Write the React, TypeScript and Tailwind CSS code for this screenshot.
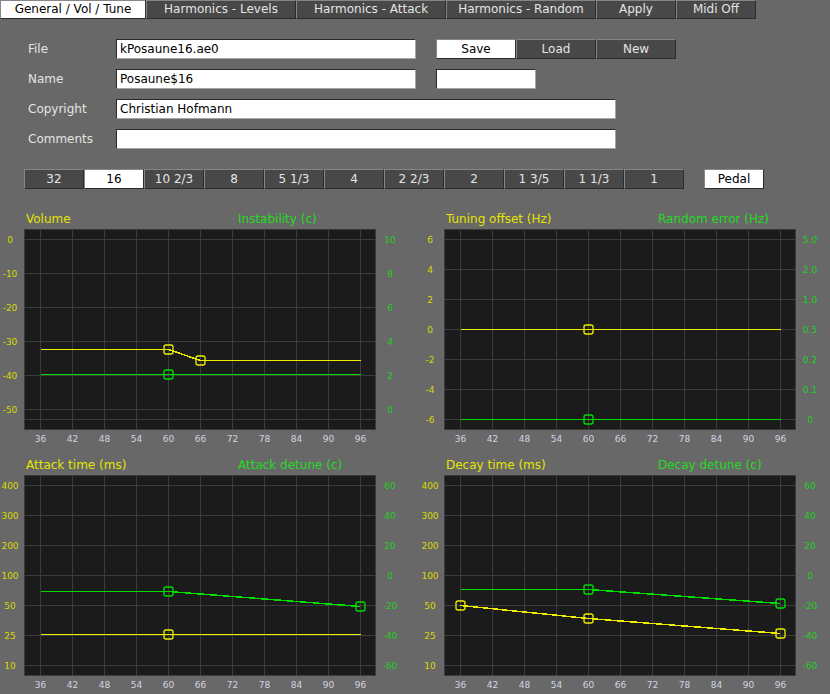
import React from "react";

const tabs = [
  { label: "General / Vol / Tune", w: "w-[146px]", active: true },
  { label: "Harmonics - Levels", w: "w-[150px]", active: false },
  { label: "Harmonics - Attack", w: "w-[150px]", active: false },
  { label: "Harmonics - Random", w: "w-[150px]", active: false },
  { label: "Apply", w: "w-[80px]", active: false },
  { label: "Midi Off", w: "w-[80px]", active: false },
];

const footages = ["32", "16", "10 2/3", "8", "5 1/3", "4", "2 2/3", "2", "1 3/5", "1 1/3", "1"];

const raised = "border border-t-[#868686] border-l-[#868686] border-b-[#2c2c2c] border-r-[#2c2c2c]";
const sunken = "border border-t-[#2a2a2a] border-l-[#2a2a2a] border-b-[#a4a4a4] border-r-[#a4a4a4]";

const YEL = "#eeee00";
const GRN = "#00dd00";

type Pt = [number, number];
type Series = { color: string; pts: Pt[]; marks: Pt[] };

// x position of a key (36..96) inside the plot, plot starts at 24
const kx = (n: number) => 24 + 16 + ((n - 36) / 6) * 32;

const keys = [36, 42, 48, 54, 60, 66, 72, 78, 84, 90, 96];

function Chart({
  hLines,
  left,
  right,
  series,
}: {
  hLines: number[];
  left: string[];
  right: string[];
  series: Series[];
}) {
  return (
    <svg width={420} height={227} className="block" shapeRendering="crispEdges">
      <rect x={24} y={0} width={352} height={201} fill="#1b1b1b" />
      <rect x={24.5} y={0.5} width={351} height={200} fill="none" stroke="#3a3a3a" />
      {keys.map((k) => (
        <line key={k} x1={kx(k) + 0.5} x2={kx(k) + 0.5} y1={0} y2={201} stroke="#3c3c3c" />
      ))}
      {hLines.map((y) => (
        <line key={y} x1={24} x2={376} y1={y + 0.5} y2={y + 0.5} stroke="#3c3c3c" />
      ))}
      {left.map((t, i) => (
        <text
          key={"l" + t}
          x={10}
          y={hLines[i] + 1}
          fill="#d8d800"
          fontSize={9}
          textAnchor="middle"
          dominantBaseline="central"
          fontFamily="DejaVu Sans, sans-serif"
        >
          {t}
        </text>
      ))}
      {right.map((t, i) => (
        <text
          key={"r" + t}
          x={390}
          y={hLines[i] + 1}
          fill="#22d022"
          fontSize={9}
          textAnchor="middle"
          dominantBaseline="central"
          fontFamily="DejaVu Sans, sans-serif"
        >
          {t}
        </text>
      ))}
      {keys.map((k) => (
        <text
          key={"x" + k}
          x={kx(k) + 0.5}
          y={210}
          fill="#d4d4e0"
          fontSize={9}
          textAnchor="middle"
          dominantBaseline="central"
          fontFamily="DejaVu Sans, sans-serif"
        >
          {k}
        </text>
      ))}
      {series.map((s, i) => (
        <g key={i}>
          <polyline
            points={s.pts.map(([n, y]) => `${kx(n) + 0.5},${y}`).join(" ")}
            fill="none"
            stroke={s.color}
            strokeWidth={1.5}
          />
          {s.marks.map(([n, y]) => (
            <rect
              key={n}
              x={kx(n) + 0.5 - 4.5}
              y={y - 4.5}
              width={9}
              height={9}
              rx={2}
              fill="none"
              stroke={s.color}
              strokeWidth={1.3}
              shapeRendering="geometricPrecision"
            />
          ))}
        </g>
      ))}
    </svg>
  );
}

function ChartBlock({
  t1,
  t2,
  children,
}: {
  t1: string;
  t2: string;
  children: React.ReactNode;
}) {
  return (
    <div className="w-[420px] shrink-0 flex flex-col">
      <div className="h-[19px] pt-[1px] flex leading-[16px]">
        <span className="ml-[26px] w-[212px] text-[#e4e400]">{t1}</span>
        <span className="text-[#22dd22]">{t2}</span>
      </div>
      {children}
    </div>
  );
}

const step30 = [10, 40, 70, 100, 130, 160, 190];
const step34 = [10, 44, 78, 112, 146, 180, 190];

export default function App() {
  return (
    <div className="w-[830px] h-[694px] overflow-hidden bg-[#686868] font-['DejaVu_Sans',sans-serif] text-[12px] text-[#e4e4e4]">
      {/* tab bar */}
      <div className="flex h-[19px]">
        {tabs.map((t) => (
          <div
            key={t.label}
            className={`${t.w} h-[19px] leading-[16px] text-center ${raised} ${
              t.active ? "bg-white text-black" : "bg-[#484848]"
            }`}
          >
            {t.label}
          </div>
        ))}
      </div>

      {/* file info */}
      <div className="flex flex-col gap-[10px] pl-[28px] pt-[20px]">
        <div className="flex items-center">
          <span className="w-[88px]">File</span>
          <div className={`w-[300px] h-[20px] bg-white text-black pl-[3px] leading-[18px] ${sunken}`}>
            kPosaune16.ae0
          </div>
          <div className="flex ml-[20px]">
            <div className={`w-[80px] h-[20px] leading-[18px] text-center bg-white text-black ${raised}`}>Save</div>
            <div className={`w-[80px] h-[20px] leading-[18px] text-center bg-[#484848] ${raised}`}>Load</div>
            <div className={`w-[80px] h-[20px] leading-[18px] text-center bg-[#484848] ${raised}`}>New</div>
          </div>
        </div>
        <div className="flex items-center">
          <span className="w-[88px]">Name</span>
          <div className={`w-[300px] h-[20px] bg-white text-black pl-[3px] leading-[18px] ${sunken}`}>
            Posaune$16
          </div>
          <div className={`ml-[20px] w-[100px] h-[20px] bg-white ${sunken}`} />
        </div>
        <div className="flex items-center">
          <span className="w-[88px]">Copyright</span>
          <div className={`w-[500px] h-[20px] bg-white text-black pl-[3px] leading-[18px] ${sunken}`}>
            Christian Hofmann
          </div>
        </div>
        <div className="flex items-center">
          <span className="w-[88px]">Comments</span>
          <div className={`w-[500px] h-[20px] bg-white ${sunken}`} />
        </div>
      </div>

      {/* footage selector */}
      <div className="flex pl-[24px] mt-[20px]">
        {footages.map((f) => (
          <div
            key={f}
            className={`w-[60px] h-[20px] leading-[18px] text-center ${raised} ${
              f === "16" ? "bg-white text-black" : "bg-[#484848]"
            }`}
          >
            {f}
          </div>
        ))}
        <div className={`ml-[20px] w-[60px] h-[20px] leading-[18px] text-center bg-white text-black ${raised}`}>
          Pedal
        </div>
      </div>

      {/* charts */}
      <div className="flex flex-wrap w-[840px] mt-[21px]">
        <ChartBlock t1="Volume" t2="Instability (c)">
          <Chart
            hLines={step34}
            left={["0", "-10", "-20", "-30", "-40", "-50"]}
            right={["10", "8", "6", "4", "2", "0"]}
            series={[
              { color: YEL, pts: [[36, 120.5], [60, 120.5], [66, 131.5], [96, 131.5]], marks: [[60, 120.5], [66, 131.5]] },
              { color: GRN, pts: [[36, 145.5], [96, 145.5]], marks: [[60, 145.5]] },
            ]}
          />
        </ChartBlock>
        <ChartBlock t1="Tuning offset (Hz)" t2="Random error (Hz)">
          <Chart
            hLines={step30}
            left={["6", "4", "2", "0", "-2", "-4", "-6"]}
            right={["5.0", "2.0", "1.0", "0.5", "0.2", "0.1", "0"]}
            series={[
              { color: YEL, pts: [[36, 100.5], [96, 100.5]], marks: [[60, 100.5]] },
              { color: GRN, pts: [[36, 190.5], [96, 190.5]], marks: [[60, 190.5]] },
            ]}
          />
        </ChartBlock>
        <ChartBlock t1="Attack time (ms)" t2="Attack detune (c)">
          <Chart
            hLines={step30}
            left={["400", "300", "200", "100", "50", "25", "10"]}
            right={["60", "40", "20", "0", "-20", "-40", "-60"]}
            series={[
              { color: GRN, pts: [[36, 116.5], [60, 116.5], [96, 131.5]], marks: [[60, 116.5], [96, 131.5]] },
              { color: YEL, pts: [[36, 159.5], [96, 159.5]], marks: [[60, 159.5]] },
            ]}
          />
        </ChartBlock>
        <ChartBlock t1="Decay time (ms)" t2="Decay detune (c)">
          <Chart
            hLines={step30}
            left={["400", "300", "200", "100", "50", "25", "10"]}
            right={["60", "40", "20", "0", "-20", "-40", "-60"]}
            series={[
              { color: GRN, pts: [[36, 114.5], [60, 114.5], [96, 128.5]], marks: [[60, 114.5], [96, 128.5]] },
              { color: YEL, pts: [[36, 130.5], [60, 143.5], [96, 158.5]], marks: [[36, 130.5], [60, 143.5], [96, 158.5]] },
            ]}
          />
        </ChartBlock>
      </div>
    </div>
  );
}
